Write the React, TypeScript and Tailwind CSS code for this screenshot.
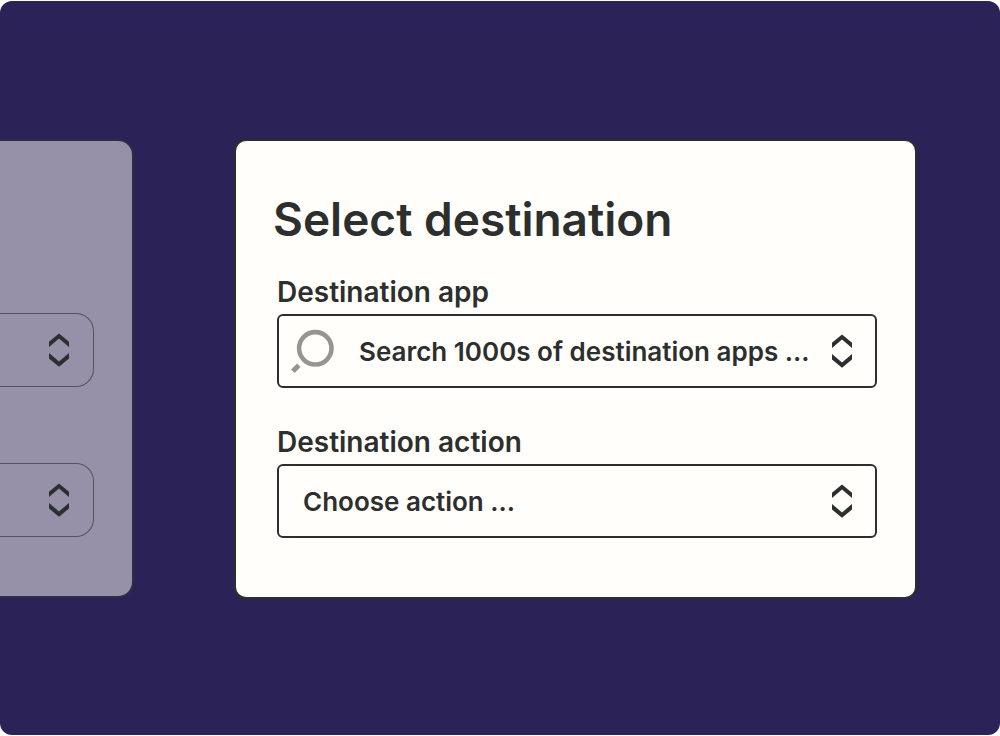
import { clsx } from "clsx";

function Chevrons() {
  return (
    <svg
      viewBox="0 0 20 34"
      className="pointer-events-none absolute right-[25px] top-5 h-[34px] w-5 fill-[#2d2e2e]"
      aria-hidden="true"
    >
      <path d="M0 8.8 10 0.6 20 8.8V14L10 5.4 0 14Z" />
      <path d="M0 20 10 28.4 20 20V25.4L10 33.7 0 25.4Z" />
    </svg>
  );
}

function SearchIcon() {
  return (
    <svg
      viewBox="0 0 44 44"
      className="pointer-events-none absolute left-[13px] top-3.5 size-11 overflow-visible"
      fill="none"
      stroke="#959592"
      aria-hidden="true"
    >
      <circle cx="25.3" cy="20.3" r="16.2" strokeWidth="4.6" />
      <path d="M8.8 37.2 2.8 43.2" strokeWidth="5" />
    </svg>
  );
}

type FieldProps = {
  id: string;
  label: string;
  placeholder: string;
  search?: boolean;
};

function Field({ id, label, placeholder, search }: FieldProps) {
  return (
    <div>
      <label htmlFor={id} className="block text-[28px] leading-11 font-semibold">
        {label}
      </label>
      <div className="relative">
        <select
          id={id}
          className={clsx(
            "block h-[74px] w-full appearance-none rounded-md border-2 border-[#2d2e2e] bg-transparent pr-14 text-[26px] font-semibold",
            search ? "pl-20" : "pl-6"
          )}
        >
          <option>{placeholder}</option>
        </select>
        {search && <SearchIcon />}
        <Chevrons />
      </div>
    </div>
  );
}

function SourceSelect({ label }: { label: string }) {
  return (
    <div className="relative">
      <select
        aria-label={label}
        className="block h-[74px] w-full appearance-none rounded-r-[18px] border border-l-0 border-[#55535b] bg-transparent"
      />
      <Chevrons />
    </div>
  );
}

export default function App() {
  return (
    <div className="min-h-screen bg-white py-px font-['Inter',sans-serif] text-[#2d2e2e]">
      <main className="flex min-h-[calc(100vh-2px)] items-start rounded-xl bg-[#2b2358] pt-[138px] pr-[83px] pb-20">
        <section className="mr-[100px] w-[134px] shrink-0 space-y-[76px] rounded-r-2xl border-2 border-l-0 border-[#312c45] bg-[#9690a8] pt-[172px] pr-[38px] pb-[59px]">
          <SourceSelect label="Source app" />
          <SourceSelect label="Source action" />
        </section>

        <section className="min-w-0 flex-1 rounded-xl border-2 border-[#2d2e2e] bg-[#fffefb] pt-12 pr-[38px] pb-[59px] pl-[41px]">
          <h1 className="-ml-1 text-[46px] leading-[60px] font-semibold">
            Select destination
          </h1>
          <div className="mt-[21px] space-y-8">
            <Field
              id="destination-app"
              label="Destination app"
              placeholder="Search 1000s of destination apps ..."
              search
            />
            <Field
              id="destination-action"
              label="Destination action"
              placeholder="Choose action ..."
            />
          </div>
        </section>
      </main>
    </div>
  );
}
